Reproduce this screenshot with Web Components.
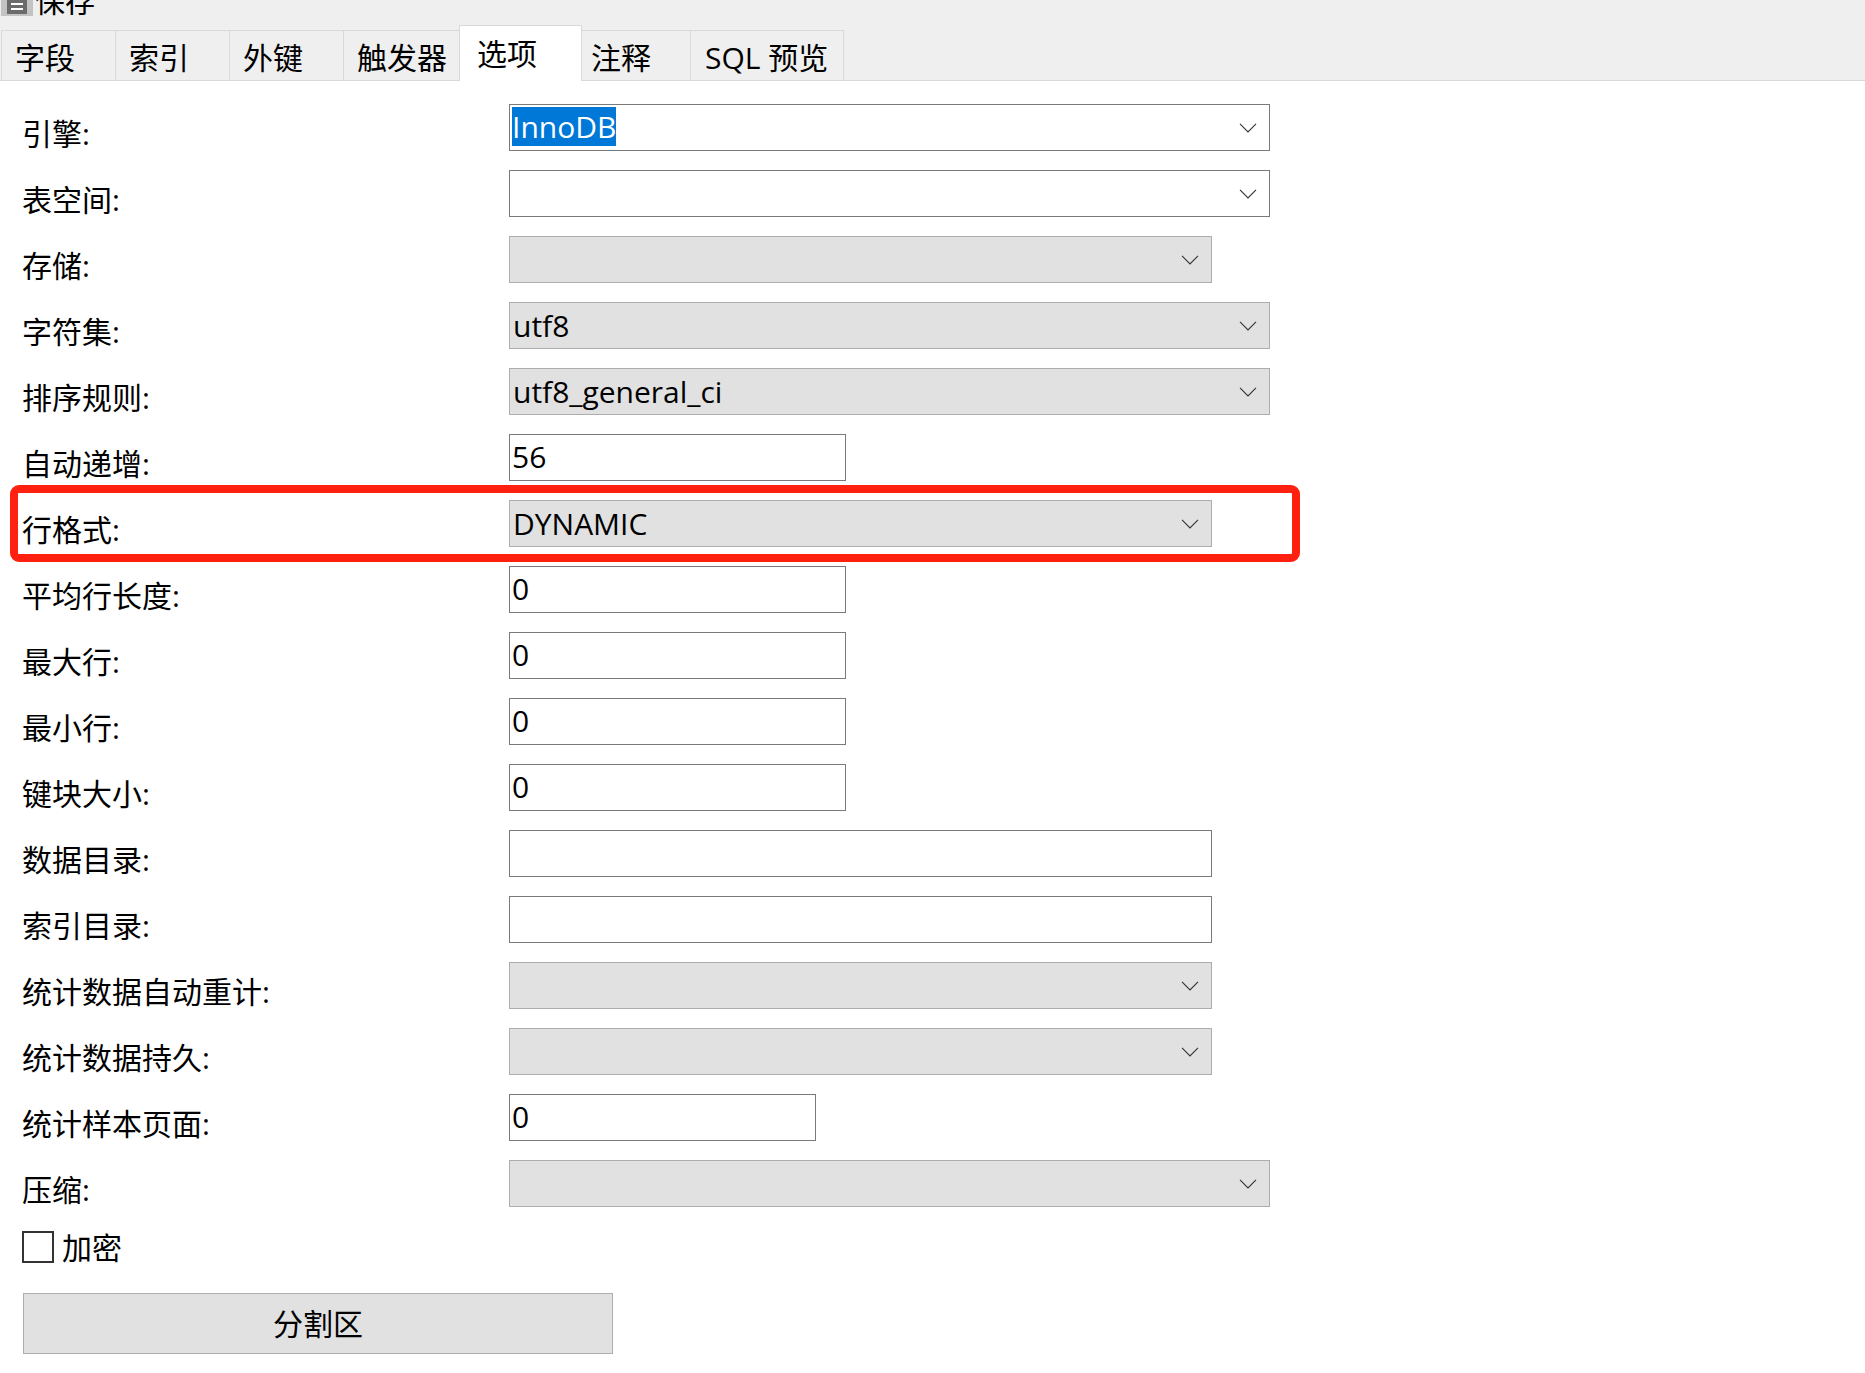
<!DOCTYPE html>
<html lang="zh-CN">
<head>
<meta charset="utf-8">
<meta name="viewport" content="width=device-width, initial-scale=1">
<title>选项</title>
<style>
  body {
    margin: 0;
    background: #fff;
    color: #000;
    font: 30px/40px "Open Sans", "Noto Sans CJK SC", sans-serif;
  }
</style>
</head>
<body>
<table-designer></table-designer>

<template id="tool-bar">
  <style>
    :host { display: flex; height: 16px; overflow: hidden; background: #efefef; padding: 0 1px 9px; }
    button { display: flex; align-items: flex-end; gap: 2px; height: 16px; border: 0; padding: 0; background: none; font: inherit; color: inherit; }
    svg { display: block; flex: none; }
    span { line-height: 30px; }
  </style>
  <button type="button">
    <svg width="32" height="16" viewBox="0 0 32 16" aria-hidden="true">
      <path fill="#c3c3c3" d="M0 0h32v16H0z"/>
      <path fill="#6b6b6b" d="M6 0h20v14H6z"/>
      <path fill="#fff" d="M10 3h12v2H10zM10 8h12v2H10z"/>
    </svg>
    <span><slot></slot></span>
  </button>
</template>

<template id="tab-strip">
  <style>
    :host { display: flex; align-items: flex-end; padding-left: 1px; background: #efefef linear-gradient(#d9d9d9, #d9d9d9) bottom / 100% 1px no-repeat; }
  </style>
  <slot></slot>
</template>

<template id="tab-item">
  <style>
    :host { display: block; }
    button {
      display: block; box-sizing: border-box; height: 51px; min-width: 114px;
      margin: 0; padding: 2px 12px 0 13px; text-align: left; white-space: nowrap;
      border: 1px solid #d9d9d9; border-right: 0; background: #efefef;
      font: inherit; line-height: 49px; color: inherit;
    }
    :host([selected]) button { height: 56px; min-width: 123px; padding-top: 0; padding-left: 17px; border-right: 1px solid #d9d9d9; border-bottom: 0; background: #fff; line-height: 47px; }
    :host([after]) button { min-width: 108px; padding-left: 9px; border-left: 0; }
    :host([last]) button { min-width: 154px; padding-left: 14px; border-right: 1px solid #d9d9d9; }
  </style>
  <button type="button" role="tab"><slot></slot></button>
</template>

<template id="option-row">
  <style>
    :host { display: grid; grid-template-columns: 487px minmax(0, 761px); align-items: center; position: relative; }
    :host([marked])::after {
      content: ""; position: absolute; inset: -15px -30px -15px -12px;
      border: 8px solid #ff2010; border-radius: 9px; pointer-events: none;
    }
    label { padding-top: 13px; line-height: 34px; white-space: nowrap; }
    .box { display: grid; grid-template-columns: minmax(0, 1fr) 42px; width: 100%; box-sizing: border-box; height: 47px; border: 1px solid #7a7a7a; background: #fff; }
    .box.list { border-color: #adadad; background: #e1e1e1; }
    .medium { max-width: 703px; }
    .number { max-width: 337px; }
    .short { max-width: 307px; }
    input, select {
      grid-area: 1 / 1 / 2 / 3; box-sizing: border-box; width: 100%; height: 39px; margin: 2px 0 0; padding: 0 2px;
      border: 0; outline: 0; border-radius: 0; background: none; appearance: none;
      font: inherit; line-height: 39px; color: inherit;
    }
    select { height: 45px; margin: 0; padding: 0 3px; line-height: 45px; }
    input::selection { background: #0078d7; color: #fff; }
    .arrow { grid-area: 1 / 2; display: grid; place-items: center; pointer-events: none; }
    svg { display: block; }
  </style>
  <label for="field"></label>
  <div class="box"></div>
</template>

<template id="check-option">
  <style>
    :host { display: flex; }
    label { display: flex; align-items: center; gap: 8px; height: 32px; }
    input { appearance: none; box-sizing: border-box; width: 32px; height: 32px; margin: 0; border: 2px solid #333; background: #fff; }
    input:checked { background: #333; box-shadow: inset 0 0 0 4px #fff; }
    span { padding-top: 2px; }
  </style>
  <label><input type="checkbox"><span><slot></slot></span></label>
</template>

<template id="push-button">
  <style>
    :host { display: block; padding-left: 1px; }
    button { display: block; width: 100%; max-width: 590px; height: 61px; padding: 0; border: 1px solid #adadad; background: #e1e1e1; font: inherit; color: inherit; }
  </style>
  <button type="button"><slot></slot></button>
</template>

<template id="table-designer">
  <style>
    :host { display: block; }
    form { display: flex; flex-direction: column; gap: 19px; padding: 23px 22px 19px; }
    form > option-row { width: fit-content; max-width: 100%; }
    check-option { margin-top: 5px; }
    push-button { margin-top: 11px; }
  </style>
  <tool-bar>保存</tool-bar>
  <tab-strip role="tablist">
    <tab-item>字段</tab-item>
    <tab-item>索引</tab-item>
    <tab-item>外键</tab-item>
    <tab-item>触发器</tab-item>
    <tab-item selected>选项</tab-item>
    <tab-item after>注释</tab-item>
    <tab-item last>SQL 预览</tab-item>
  </tab-strip>
  <form>
    <option-row label="引擎:" kind="combo" value="InnoDB" highlight></option-row>
    <option-row label="表空间:" kind="combo"></option-row>
    <option-row label="存储:" kind="list" size="medium"></option-row>
    <option-row label="字符集:" kind="list" value="utf8"></option-row>
    <option-row label="排序规则:" kind="list" value="utf8_general_ci"></option-row>
    <option-row label="自动递增:" kind="text" size="number" value="56"></option-row>
    <option-row label="行格式:" kind="list" size="medium" value="DYNAMIC" marked></option-row>
    <option-row label="平均行长度:" kind="text" size="number" value="0"></option-row>
    <option-row label="最大行:" kind="text" size="number" value="0"></option-row>
    <option-row label="最小行:" kind="text" size="number" value="0"></option-row>
    <option-row label="键块大小:" kind="text" size="number" value="0"></option-row>
    <option-row label="数据目录:" kind="text" size="medium"></option-row>
    <option-row label="索引目录:" kind="text" size="medium"></option-row>
    <option-row label="统计数据自动重计:" kind="list" size="medium"></option-row>
    <option-row label="统计数据持久:" kind="list" size="medium"></option-row>
    <option-row label="统计样本页面:" kind="text" size="short" value="0"></option-row>
    <option-row label="压缩:" kind="list"></option-row>
    <check-option>加密</check-option>
    <push-button>分割区</push-button>
  </form>
</template>

<script>
  class TemplateElement extends HTMLElement {
    constructor() {
      super();
      const template = document.getElementById(this.localName);
      this.attachShadow({ mode: "open" }).append(template.content.cloneNode(true));
    }
  }

  const CHEVRON = '<svg width="18" height="10" viewBox="0 0 18 10" aria-hidden="true"><path d="M1 .8 9 9 17 .8" fill="none" stroke="#333" stroke-width="1.1"/></svg>';

  class ToolBar extends TemplateElement {}
  class TabStrip extends TemplateElement {}
  class TabItem extends TemplateElement {
    connectedCallback() {
      this.shadowRoot.querySelector("button").setAttribute("aria-selected", this.hasAttribute("selected"));
    }
  }
  class CheckOption extends TemplateElement {}
  class PushButton extends TemplateElement {}

  class OptionRow extends TemplateElement {
    connectedCallback() {
      const kind = this.getAttribute("kind");
      const value = this.getAttribute("value") || "";
      const label = this.getAttribute("label");
      const box = this.shadowRoot.querySelector(".box");
      this.shadowRoot.querySelector("label").textContent = label;
      box.classList.add(kind);
      if (this.hasAttribute("size")) box.classList.add(this.getAttribute("size"));

      const field = document.createElement(kind === "list" ? "select" : "input");
      field.id = "field";
      if (kind === "list") {
        field.append(new Option(value, value));
      } else {
        field.type = "text";
        field.value = value;
        field.spellcheck = false;
      }
      box.replaceChildren(field);

      if (kind !== "text") {
        const arrow = document.createElement("span");
        arrow.className = "arrow";
        arrow.innerHTML = CHEVRON;
        box.append(arrow);
      }
      if (kind === "combo") field.setAttribute("role", "combobox");
      if (this.hasAttribute("highlight")) {
        field.focus();
        field.select();
      }
    }
  }

  class TableDesigner extends TemplateElement {}

  customElements.define("tool-bar", ToolBar);
  customElements.define("tab-strip", TabStrip);
  customElements.define("tab-item", TabItem);
  customElements.define("option-row", OptionRow);
  customElements.define("check-option", CheckOption);
  customElements.define("push-button", PushButton);
  customElements.define("table-designer", TableDesigner);
</script>
</body>
</html>
